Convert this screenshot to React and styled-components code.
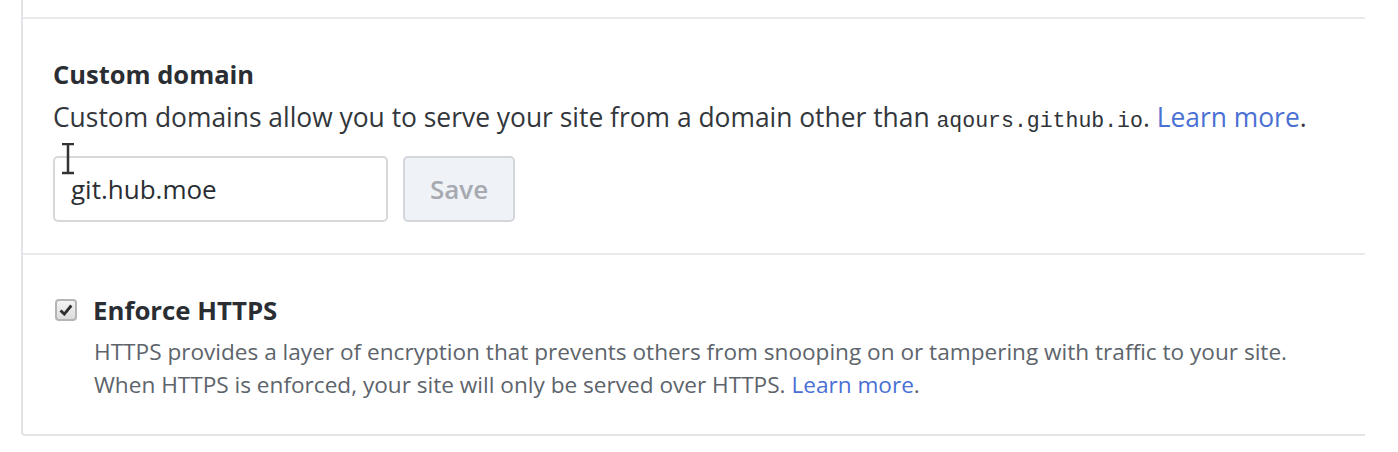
import * as React from "react";
import styled, { createGlobalStyle } from "styled-components";

const GlobalStyle = createGlobalStyle`
    html, body {
        margin: 0;
        padding: 0;
        background: #ffffff;
    }
    body {
        font-family: "Open Sans", "Noto Sans", sans-serif;
        color: #24292e;
    }
`;

const Page = styled.div`
    width: 1398px;
    height: 452px;
    overflow: hidden;
    background: #ffffff;
`;

const Box = styled.div`
    margin-left: 21px;
    width: 1342px;
    border-left: 2px solid #e3e4e8;
    border-bottom: 2px solid #e3e4e8;
    border-bottom-left-radius: 4px;
`;

const Section = styled.div`
    position: relative;
    padding: ${props => props.pad};
    border-bottom: ${props => props.last ? 'none' : '2px solid #e8e9ed'};
    min-height: ${props => props.minH || 0}px;
    box-sizing: border-box;
`;

const Title = styled.div`
    font-size: 25.5px;
    font-weight: 700;
    line-height: 30px;
    color: #2a2e33;
`;

const Desc = styled.p`
    margin: 13px 0 0;
    font-size: 26.4px;
    line-height: 30px;
    color: #33373c;
`;

const Code = styled.code`
    font-family: "Liberation Mono", "DejaVu Sans Mono", monospace;
    font-size: 21.5px;
    line-height: 1;
    color: #2f3338;
`;

const Link = styled.a`
    color: #4a70d4;
    text-decoration: none;
`;

const FormRow = styled.div`
    display: flex;
    gap: 15px;
    margin-top: 23px;
`;

const Input = styled.input`
    box-sizing: border-box;
    width: 335px;
    height: 66px;
    padding: 0 16px;
    border: 2px solid #d6d8dc;
    border-radius: 5px;
    font-family: "Open Sans", "Noto Sans", sans-serif;
    font-size: 26px;
    color: #2a2e33;
    background: #fff;
    outline: none;
`;

const SaveButton = styled.button`
    box-sizing: border-box;
    width: 112px;
    height: 66px;
    border: 2px solid #d3d6da;
    border-radius: 5px;
    background: #eff2f6;
    color: #a6aab0;
    font-family: "Open Sans", "Noto Sans", sans-serif;
    font-size: 26px;
    font-weight: 600;
    padding: 0;
    cursor: default;
`;

const CheckRow = styled.label`
    display: flex;
    align-items: center;
    gap: 16px;
    height: 32px;
    margin-left: 2px;
`;

const CheckBox = styled.span`
    box-sizing: border-box;
    width: 22px;
    height: 22px;
    border: 2px solid #b5b5b5;
    border-radius: 4px;
    background: linear-gradient(#f4f4f4, #dcdcdc);
    display: flex;
    align-items: center;
    justify-content: center;
`;

const CheckLabel = styled.span`
    font-size: 25.8px;
    font-weight: 700;
    color: #2a2e33;
`;

const Note = styled.p`
    margin: 9px 0 0 41px;
    font-size: 22.6px;
    line-height: 33px;
    color: #5d646b;
`;

const Cursor = styled.svg`
    position: absolute;
    left: 37px;
    top: 124px;
`;

const App = () => (
    <Page>
        <GlobalStyle />
        <Box>
            <Section minH={19} />
            <Section pad="40px 30px 31px">
                <Title>Custom domain</Title>
                <Desc>
                    Custom domains allow you to serve your site from a domain other than <Code>aqours.github.io</Code>. <Link href="#">Learn more</Link>.
                </Desc>
                <FormRow>
                    <Input defaultValue="git.hub.moe" />
                    <SaveButton disabled>Save</SaveButton>
                </FormRow>
                <Cursor width="16" height="32" viewBox="0 0 16 32">
                    <path d="M2 1h12M8 1v29M2 30h12" stroke="#333" strokeWidth="2.5" fill="none" />
                </Cursor>
            </Section>
            <Section pad="39px 30px 33px" last>
                <CheckRow>
                    <CheckBox>
                        <svg width="14" height="12" viewBox="0 0 14 12">
                            <path d="M1.5 6.5l3.8 3.6 7-8.6" stroke="#2e2e2e" strokeWidth="2.8" fill="none" />
                        </svg>
                    </CheckBox>
                    <CheckLabel>Enforce HTTPS</CheckLabel>
                </CheckRow>
                <Note>
                    HTTPS provides a layer of encryption that prevents others from snooping on or tampering with traffic to your site.<br />
                    When HTTPS is enforced, your site will only be served over HTTPS. <Link href="#">Learn more</Link>.
                </Note>
            </Section>
        </Box>
    </Page>
);

export default App;
